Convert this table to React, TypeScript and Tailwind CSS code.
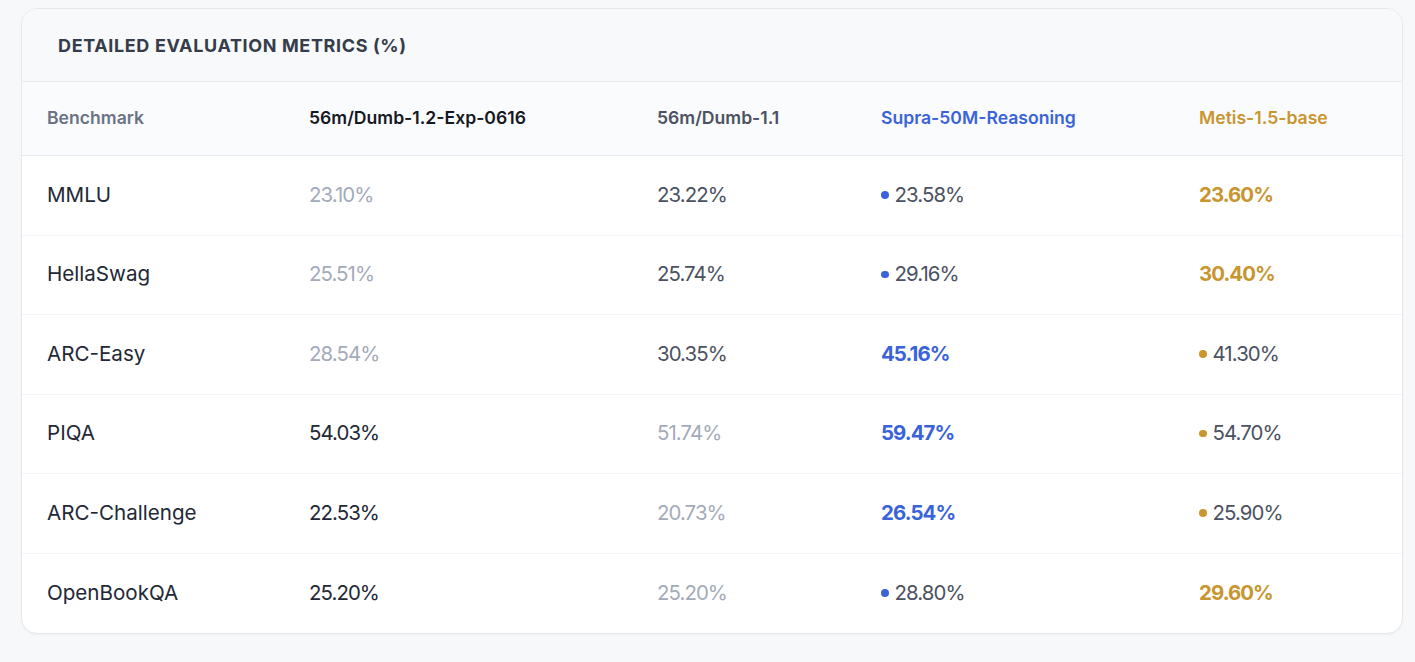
import React from "react";

type Cell = { v: string; k: "muted" | "normal" | "dark" | "blueDot" | "blueBold" | "goldDot" | "goldBold" };

const rows: { name: string; cells: Cell[] }[] = [
  { name: "MMLU", cells: [{ v: "23.10%", k: "muted" }, { v: "23.22%", k: "normal" }, { v: "23.58%", k: "blueDot" }, { v: "23.60%", k: "goldBold" }] },
  { name: "HellaSwag", cells: [{ v: "25.51%", k: "muted" }, { v: "25.74%", k: "normal" }, { v: "29.16%", k: "blueDot" }, { v: "30.40%", k: "goldBold" }] },
  { name: "ARC-Easy", cells: [{ v: "28.54%", k: "muted" }, { v: "30.35%", k: "normal" }, { v: "45.16%", k: "blueBold" }, { v: "41.30%", k: "goldDot" }] },
  { name: "PIQA", cells: [{ v: "54.03%", k: "dark" }, { v: "51.74%", k: "muted" }, { v: "59.47%", k: "blueBold" }, { v: "54.70%", k: "goldDot" }] },
  { name: "ARC-Challenge", cells: [{ v: "22.53%", k: "dark" }, { v: "20.73%", k: "muted" }, { v: "26.54%", k: "blueBold" }, { v: "25.90%", k: "goldDot" }] },
  { name: "OpenBookQA", cells: [{ v: "25.20%", k: "dark" }, { v: "25.20%", k: "muted" }, { v: "28.80%", k: "blueDot" }, { v: "29.60%", k: "goldBold" }] },
];

function Value({ c }: { c: Cell }) {
  switch (c.k) {
    case "muted":
      return <span className="text-[#a3abb9]">{c.v}</span>;
    case "normal":
      return <span className="text-[#4b5261]">{c.v}</span>;
    case "dark":
      return <span className="text-[#232836]">{c.v}</span>;
    case "blueDot":
      return (
        <span className="flex items-center gap-[6px] text-[#4b5261]">
          <span className="h-[7.5px] w-[7.5px] rounded-full bg-[#3b63d9]" />
          {c.v}
        </span>
      );
    case "blueBold":
      return <span className="font-bold text-[#3b63d9]">{c.v}</span>;
    case "goldDot":
      return (
        <span className="flex items-center gap-[6px] text-[#4b5261]">
          <span className="h-[7.5px] w-[7.5px] rounded-full bg-[#c9952f]" />
          {c.v}
        </span>
      );
    case "goldBold":
      return <span className="font-bold text-[#c9952f]">{c.v}</span>;
  }
}

const cols = "grid grid-cols-[262px_348px_224px_318px_1fr]";

export default function App() {
  return (
    <div
      className="min-h-[662px] w-[1415px] bg-[#f7f8fa] pl-[21px] pt-[8px]"
      style={{ fontFamily: "Inter, 'Noto Sans', sans-serif" }}
    >
      <div className="w-[1382px] overflow-hidden rounded-[16px] border border-[#e6e8ec] bg-white shadow-[0_1px_2px_rgba(0,0,0,0.04)]">
        <div className="flex h-[73px] items-center border-b border-[#e8eaef] bg-[#f8f9fb] pl-[36px]">
          <span className="text-[18px] font-bold uppercase tracking-[0.035em] text-[#353c4a]">
            Detailed Evaluation Metrics (%)
          </span>
        </div>
        <div className={`${cols} h-[74px] items-center border-b border-[#e6e9ef] bg-[#fafbfd] text-[17.6px] font-semibold`}>
          <div className="pl-[25px] text-[#6b7384]">Benchmark</div>
          <div className="pl-[25px] text-[#15181f]">56m/Dumb-1.2-Exp-0616</div>
          <div className="pl-[25px] text-[#4b5261]">56m/Dumb-1.1</div>
          <div className="pl-[25px] text-[#3b63d9]">Supra-50M-Reasoning</div>
          <div className="pl-[25px] text-[#c9952f]">Metis-1.5-base</div>
        </div>
        {rows.map((r, i) => (
          <div
            key={r.name}
            className={`${cols} h-[79.5px] items-center ${i < rows.length - 1 ? "border-b border-[#f1f3f6]" : ""}`}
          >
            <div className="pl-[25px] text-[20.6px] text-[#232836]">{r.name}</div>
            {r.cells.map((c, j) => (
              <div key={j} className="pl-[25px] text-[20.4px] tracking-[-0.045em]">
                <Value c={c} />
              </div>
            ))}
          </div>
        ))}
      </div>
    </div>
  );
}
